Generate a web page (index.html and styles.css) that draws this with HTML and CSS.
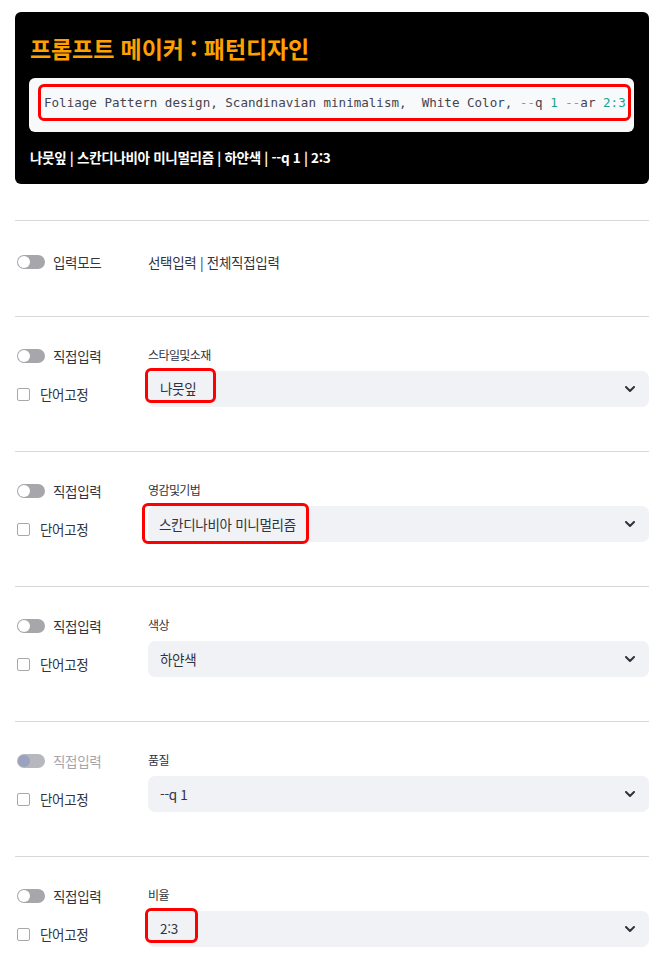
FILE: index.html
```html
<!DOCTYPE html>
<html lang="ko">
<head>
    <meta charset="UTF-8">
    <meta name="viewport" content="width=device-width, initial-scale=1.0">
    <title>프롬프트 메이커 : 패턴디자인</title>
    <link rel="stylesheet" href="styles.css">
</head>
<body>
    <div class="container">
        <!-- Header -->
        <div class="header">
            <h1 class="title">프롬프트 메이커 : 패턴디자인</h1>
            <div class="code-box">
                <pre class="code">Foliage Pattern design, Scandinavian minimalism,  White Color, <span class="op">--</span>q <span class="num">1</span> <span class="op">--</span>ar <span class="num">2:3</span></pre>
            </div>
            <p class="summary">나뭇잎 | 스칸디나비아 미니멀리즘 | 하얀색 | --q 1 | 2:3</p>
        </div>

        <!-- Mode -->
        <div class="field field-mode">
            <div class="side">
                <div class="toggle-row">
                    <span class="toggle"></span>
                    <span>입력모드</span>
                </div>
            </div>
            <div class="main">
                <p class="mode-text">선택입력 | 전체직접입력</p>
            </div>
        </div>

        <div class="field">
            <div class="side">
                <div class="toggle-row">
                    <span class="toggle"></span>
                    <span>직접입력</span>
                </div>
                <div class="check-row">
                    <span class="checkbox"></span>
                    <span>단어고정</span>
                </div>
            </div>
            <div class="main">
                <p class="label">스타일및소재</p>
                <div class="select">
                    <span class="value mark">나뭇잎</span>
                    <svg class="chevron" width="10" height="6" viewBox="0 0 10 6"><path d="M1 1 L5 5 L9 1" fill="none" stroke="#31333f" stroke-width="2" stroke-linecap="round" stroke-linejoin="round"/></svg>
                </div>
            </div>
        </div>

        <div class="field">
            <div class="side">
                <div class="toggle-row">
                    <span class="toggle"></span>
                    <span>직접입력</span>
                </div>
                <div class="check-row">
                    <span class="checkbox"></span>
                    <span>단어고정</span>
                </div>
            </div>
            <div class="main">
                <p class="label">영감및기법</p>
                <div class="select">
                    <span class="value mark mark-tall">스칸디나비아 미니멀리즘</span>
                    <svg class="chevron" width="10" height="6" viewBox="0 0 10 6"><path d="M1 1 L5 5 L9 1" fill="none" stroke="#31333f" stroke-width="2" stroke-linecap="round" stroke-linejoin="round"/></svg>
                </div>
            </div>
        </div>

        <div class="field">
            <div class="side">
                <div class="toggle-row">
                    <span class="toggle"></span>
                    <span>직접입력</span>
                </div>
                <div class="check-row">
                    <span class="checkbox"></span>
                    <span>단어고정</span>
                </div>
            </div>
            <div class="main">
                <p class="label">색상</p>
                <div class="select">
                    <span class="value">하얀색</span>
                    <svg class="chevron" width="10" height="6" viewBox="0 0 10 6"><path d="M1 1 L5 5 L9 1" fill="none" stroke="#31333f" stroke-width="2" stroke-linecap="round" stroke-linejoin="round"/></svg>
                </div>
            </div>
        </div>

        <div class="field">
            <div class="side">
                <div class="toggle-row disabled">
                    <span class="toggle"></span>
                    <span>직접입력</span>
                </div>
                <div class="check-row">
                    <span class="checkbox"></span>
                    <span>단어고정</span>
                </div>
            </div>
            <div class="main">
                <p class="label">품질</p>
                <div class="select">
                    <span class="value">--q 1</span>
                    <svg class="chevron" width="10" height="6" viewBox="0 0 10 6"><path d="M1 1 L5 5 L9 1" fill="none" stroke="#31333f" stroke-width="2" stroke-linecap="round" stroke-linejoin="round"/></svg>
                </div>
            </div>
        </div>

        <div class="field">
            <div class="side">
                <div class="toggle-row">
                    <span class="toggle"></span>
                    <span>직접입력</span>
                </div>
                <div class="check-row">
                    <span class="checkbox"></span>
                    <span>단어고정</span>
                </div>
            </div>
            <div class="main">
                <p class="label">비율</p>
                <div class="select">
                    <span class="value mark">2:3</span>
                    <svg class="chevron" width="10" height="6" viewBox="0 0 10 6"><path d="M1 1 L5 5 L9 1" fill="none" stroke="#31333f" stroke-width="2" stroke-linecap="round" stroke-linejoin="round"/></svg>
                </div>
            </div>
        </div>
    </div>
</body>
</html>
```

FILE: styles.css
```css
body {
    font-family: "Noto Sans CJK KR", "Noto Sans", sans-serif;
    margin: 0;
    padding: 0;
    background-color: #fff;
    color: #31333f;
}

p {
    margin: 0;
}

.container {
    width: 634px;
    padding: 12px 17px 0 15px;
}

/* Header */
.header {
    background-color: #000;
    border-radius: 6px;
    padding: 22px 15px 17px 15px;
    margin-bottom: 36px;
}

.title {
    margin: 0 0 16px 0;
    font-size: 23px;
    line-height: 28px;
    font-weight: 700;
    letter-spacing: -0.1px;
    color: #ffa000;
}

.code-box {
    background-color: #f8f9fb;
    border-radius: 6px;
    margin-left: -1px;
    padding: 6px 3px 11px 9px;
}

.code {
    margin: 0;
    border: 3px solid #ff0000;
    border-radius: 6px;
    padding: 5px 3px;
    font-family: "DejaVu Sans Mono", "Liberation Mono", monospace;
    font-size: 12.55px;
    line-height: 21px;
    color: #43454f;
    white-space: pre;
    overflow: hidden;
}

    .code .op {
        color: #e8794a;
    }

    .code .num {
        color: #17a38c;
    }

.summary {
    margin-top: 15px;
    color: #fff;
    font-size: 13.5px;
    line-height: 20px;
    font-weight: 700;
    letter-spacing: -0.3px;
}

/* Fields */
.field {
    display: grid;
    grid-template-columns: 131px 1fr;
    border-top: 1px solid #d8d8dc;
    padding: 30px 0 44px 2px;
    font-size: 13.5px;
    letter-spacing: -0.3px;
}

.field-mode {
    padding: 31px 0 44px 2px;
}

.side {
    display: flex;
    flex-direction: column;
    gap: 18px;
    margin-top: -1px;
}

.field-mode .side {
    margin-top: 0;
}

.toggle-row,
.check-row {
    display: flex;
    align-items: center;
    height: 20px;
}

.toggle {
    position: relative;
    width: 28px;
    height: 14px;
    border-radius: 7px;
    background-color: #a6a6ab;
    margin-right: 8px;
}

    .toggle::after {
        content: "";
        position: absolute;
        left: 1px;
        top: 1px;
        width: 12px;
        height: 12px;
        border-radius: 50%;
        background-color: #fff;
    }

.toggle-row.disabled {
    color: #a4a5ab;
}

    .toggle-row.disabled .toggle {
        background-color: #b6b8be;
    }

        .toggle-row.disabled .toggle::after {
            background-color: #9aa2bf;
        }

.checkbox {
    width: 11px;
    height: 11px;
    border: 1px solid #a8a8ac;
    border-radius: 2px;
    margin-right: 10px;
}

.mode-text {
    line-height: 20px;
}

.label {
    font-size: 12px;
    line-height: 16px;
    letter-spacing: -0.6px;
    margin-bottom: 8px;
}

.select {
    display: flex;
    align-items: center;
    justify-content: space-between;
    height: 36px;
    background-color: #f0f2f6;
    border-radius: 7px;
    padding-right: 14px;
}

.value {
    padding: 0 12px;
    line-height: 20px;
}

    .value.mark {
        align-self: flex-start;
        box-sizing: border-box;
        height: 35px;
        margin: -3px 0 0 -3px;
        padding: 4px 17px 0 12px;
        border: 3px solid #ff0000;
        border-radius: 6px;
        display: flex;
        align-items: center;
    }

    .value.mark-tall {
        height: 41px;
        margin-left: -6px;
        padding: 0 10px 0 14px;
    }

.chevron {
    display: block;
}
```
